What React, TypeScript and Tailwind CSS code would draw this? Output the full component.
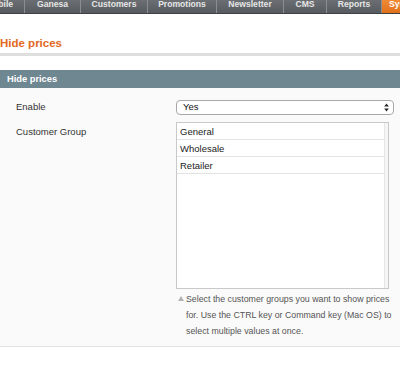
const tabs = [
  { label: "Mobile", w: "w-[50px]" },
  { label: "Ganesa", w: "w-[56px]" },
  { label: "Customers", w: "w-[67px]" },
  { label: "Promotions", w: "w-[69px]" },
  { label: "Newsletter", w: "w-[67px]" },
  { label: "CMS", w: "w-[43px]" },
  { label: "Reports", w: "w-[55px]" },
];

const groups = ["General", "Wholesale", "Retailer"];

function SelectArrows() {
  return (
    <svg width="5" height="9" viewBox="0 0 5 9" className="shrink-0">
      <path d="M2.5 0.5 L4.8 3.6 H0.2 Z" fill="#222" />
      <path d="M2.5 8.5 L4.8 5.4 H0.2 Z" fill="#222" />
    </svg>
  );
}

export default function App() {
  return (
    <div className="w-[400px] h-[388px] overflow-hidden bg-white font-['Liberation_Sans',Arial,sans-serif]">
      {/* top navigation */}
      <div className="h-[14px] border-b border-[#3d4144] bg-gradient-to-b from-[#6b6f73] to-[#575b5f] overflow-hidden">
        <div className="flex -ml-[25px] h-[13px]">
          {tabs.map((t) => (
            <div
              key={t.label}
              className={`${t.w} shrink-0 border-r border-[#8a8e91] text-center text-[8.6px] font-bold leading-[8px] text-[#e6e6e6]`}
            >
              {t.label}
            </div>
          ))}
          <div className="w-[60px] shrink-0 bg-gradient-to-b from-[#f08a35] to-[#e0701a] pl-[7px] text-[8.6px] font-bold leading-[8px] text-white">
            System
          </div>
        </div>
      </div>

      {/* page title */}
      <div className="mt-[22px] text-[11.5px] font-bold leading-[14px] text-[#e2691e]">
        Hide prices
      </div>
      <div className="mt-[3px] h-[3px] bg-[#dedede]" />

      {/* fieldset */}
      <div className="mt-[14px] h-[18px] bg-[#6f8791] pl-[7px] text-[9.3px] font-bold leading-[18px] text-white">
        Hide prices
      </div>
      <div className="bg-[#fafafa] border-b border-[#e2e2e2] pt-[12px] pb-[7px] text-[9.5px] text-[#333]">
        <div className="flex h-[15px] items-center">
          <div className="w-[176px] shrink-0 pl-[16px]">Enable</div>
          <div className="flex h-[15px] w-[218px] items-center justify-between rounded-[4px] border border-[#a8a8a8] bg-white pl-[6px] pr-[4px] text-[#111]">
            <span>Yes</span>
            <SelectArrows />
          </div>
        </div>

        <div className="mt-[7px] flex">
          <div className="w-[176px] shrink-0 pl-[16px] leading-[17px] pt-[1px]">Customer Group</div>
          <div className="flex h-[167px] w-[213px] border border-[#c9c9c9] bg-white">
            <div className="flex-1">
              {groups.map((g) => (
                <div
                  key={g}
                  className="h-[17px] border-b border-[#e3e3e3] pl-[3px] leading-[17px] text-[#222]"
                >
                  {g}
                </div>
              ))}
            </div>
            <div className="w-[4px] border-l border-[#e6e6e6] bg-[#f6f6f6]" />
          </div>
        </div>

        <div className="mt-[2px] ml-[176px] flex">
          <svg width="6" height="5" viewBox="0 0 6 5" className="mt-[5px] ml-[2px] shrink-0">
            <path d="M3 0 L6 5 H0 Z" fill="#b3b3b3" />
          </svg>
          <p className="ml-[2px] w-[208px] text-[8.8px] leading-[16px] text-[#555]">
            Select the customer groups you want to show prices for. Use the CTRL key or Command key (Mac OS) to select multiple values at once.
          </p>
        </div>
      </div>
    </div>
  );
}
